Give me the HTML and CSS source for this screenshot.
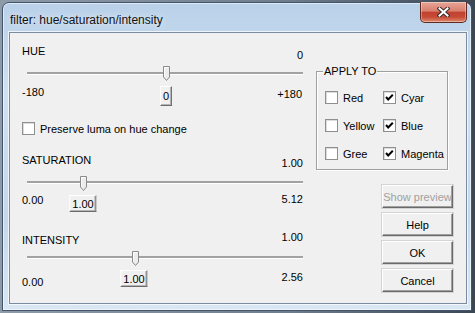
FILE: index.html
```html
<!DOCTYPE html>
<html lang="en">
<head>
    <meta charset="UTF-8">
    <title>filter: hue/saturation/intensity</title>
    <link rel="stylesheet" href="styles.css">
</head>
<body>
    <div class="window">
        <div class="titlebar">
            <span class="title">filter: hue/saturation/intensity</span>
            <div class="close">
                <svg width="13" height="10" viewBox="0 0 13 10">
                    <path d="M2.5 1.5L10.5 8.5M10.5 1.5L2.5 8.5" stroke="#3b2a2a" stroke-width="4" stroke-linecap="square"/>
                    <path d="M2.5 1.5L10.5 8.5M10.5 1.5L2.5 8.5" stroke="#fff" stroke-width="2" stroke-linecap="square"/>
                </svg>
            </div>
        </div>

        <div class="client">
            <div class="sliders">
                <!-- hue -->
                <div class="block hue">
                    <div class="head"><span class="lbl">HUE</span><span class="val">0</span></div>
                    <div class="slider">
                        <div class="track"></div>
                        <svg class="thumb" style="left:141px" width="7" height="15" viewBox="0 0 7 15"><path d="M0.5 0.5H6.5V11L3.5 14.5L0.5 11Z" fill="#ececec" stroke="#8a8a8a"/><path d="M1.5 10.5V1.5H5.5" fill="none" stroke="#fff"/></svg>
                    </div>
                    <div class="foot">
                        <span class="min">-180</span>
                        <span class="box" style="left:144px">0</span>
                        <span class="max">+180</span>
                    </div>
                </div>

                <label class="check-row">
                    <span class="cb"></span>
                    <span>Preserve luma on hue change</span>
                </label>

                <!-- saturation -->
                <div class="block sat">
                    <div class="head"><span class="lbl">SATURATION</span><span class="val">1.00</span></div>
                    <div class="slider">
                        <div class="track"></div>
                        <svg class="thumb" style="left:58px" width="7" height="15" viewBox="0 0 7 15"><path d="M0.5 0.5H6.5V11L3.5 14.5L0.5 11Z" fill="#ececec" stroke="#8a8a8a"/><path d="M1.5 10.5V1.5H5.5" fill="none" stroke="#fff"/></svg>
                    </div>
                    <div class="foot">
                        <span class="min">0.00</span>
                        <span class="box" style="left:61px">1.00</span>
                        <span class="max">5.12</span>
                    </div>
                </div>

                <!-- intensity -->
                <div class="block int">
                    <div class="head"><span class="lbl">INTENSITY</span><span class="val">1.00</span></div>
                    <div class="slider">
                        <div class="track"></div>
                        <svg class="thumb" style="left:110px" width="7" height="15" viewBox="0 0 7 15"><path d="M0.5 0.5H6.5V11L3.5 14.5L0.5 11Z" fill="#ececec" stroke="#8a8a8a"/><path d="M1.5 10.5V1.5H5.5" fill="none" stroke="#fff"/></svg>
                    </div>
                    <div class="foot">
                        <span class="min">0.00</span>
                        <span class="box" style="left:112px">1.00</span>
                        <span class="max">2.56</span>
                    </div>
                </div>
            </div>

            <div class="side">
                <div class="group">
                    <span class="legend">APPLY TO</span>
                    <div class="group-grid">
                        <label class="opt"><span class="cb"></span>Red</label>
                        <label class="opt"><span class="cb on"><svg width="11" height="11" viewBox="0 0 11 11"><polyline points="2,5 4.2,7.5 8.8,2.8" fill="none" stroke="#000" stroke-width="2"/></svg></span>Cyar</label>
                        <label class="opt"><span class="cb"></span>Yellow</label>
                        <label class="opt"><span class="cb on"><svg width="11" height="11" viewBox="0 0 11 11"><polyline points="2,5 4.2,7.5 8.8,2.8" fill="none" stroke="#000" stroke-width="2"/></svg></span>Blue</label>
                        <label class="opt"><span class="cb"></span>Gree</label>
                        <label class="opt"><span class="cb on"><svg width="11" height="11" viewBox="0 0 11 11"><polyline points="2,5 4.2,7.5 8.8,2.8" fill="none" stroke="#000" stroke-width="2"/></svg></span>Magenta</label>
                    </div>
                </div>
                <div class="buttons">
                    <button class="btn disabled">Show preview</button>
                    <button class="btn">Help</button>
                    <button class="btn">OK</button>
                    <button class="btn">Cancel</button>
                </div>
            </div>
        </div>
    </div>
</body>
</html>
```

FILE: styles.css
```css
*{
    margin: 0;
    padding: 0;
    box-sizing: border-box;
}
body{
    width: 475px;
    height: 313px;
    overflow: hidden;
    background: linear-gradient(90deg, #8d9aa8, #6f7e8e 60%, #3c4754);
    font-family: "Liberation Sans", Arial, sans-serif;
    font-size: 11px;
    color: #000;
    padding: 2px 0 0 2px;
}
/* window frame */
.window{
    width: 470px;
    height: 309px;
    border: 1px solid #44546a;
    border-radius: 7px 7px 0 0;
    background: linear-gradient(180deg, #b9d1e9 0%, #cfe0f1 30%, #c3d8ec 70%, #d9e7f4 100%);
    display: flex;
    flex-direction: column;
    box-shadow: inset 0 0 0 1px rgba(255,255,255,.55);
}
.titlebar{
    height: 29px;
    display: flex;
    align-items: flex-start;
    justify-content: space-between;
    padding: 0 4px 0 7px;
}
.title{
    font-size: 12px;
    margin-top: 10px;
    text-shadow: 0 0 6px rgba(255,255,255,.95);
    color: #111;
}
.close{
    width: 47px;
    height: 21px;
    margin-top: -1px;
    border: 1px solid #5e2a22;
    border-top: 0;
    border-radius: 0 0 5px 5px;
    background: linear-gradient(180deg, #e7a596 0%, #d9806e 45%, #c2412f 52%, #c64b37 75%, #e08a6c 100%);
    box-shadow: inset 0 0 0 1px rgba(255,255,255,.35);
    display: flex;
    align-items: center;
    justify-content: center;
}
/* client area */
.client{
    flex: 1;
    margin: 0 4px 6px 6px;
    border: 1px solid #7b8ca0;
    box-shadow: 0 0 0 1px rgba(255,255,255,.7);
    background: #f0f0f0;
    display: flex;
}
.sliders{
    width: 293px;
    padding-left: 12px;
}
.block .head{
    height: 14px;
    display: flex;
    align-items: flex-start;
    justify-content: space-between;
    line-height: 14px;
}
.slider{
    height: 24px;
    position: relative;
}
.track{
    position: absolute;
    left: 5px;
    width: 276px;
    top: 14px;
    height: 3px;
    border-top: 2px solid #a2a2a2;
    border-bottom: 1px solid #fff;
}
.thumb{
    position: absolute;
    top: 9px;
    display: block;
}
.foot{
    position: relative;
    display: flex;
    justify-content: space-between;
    align-items: flex-start;
    line-height: 14px;
}
.box{
    position: absolute;
    transform: translateX(-50%);
    display: flex;
    align-items: center;
    padding: 0 2px;
    background: #f0f0f0;
    border: 1px solid;
    border-color: #fff #6b6b6b #6b6b6b #fff;
    box-shadow: inset -1px -1px #b4b4b4;
}

.hue .head{ margin-top: 11px; }
.hue .val{ padding-top: 4px; }
.hue .thumb{ top: 8px; }
.hue .foot{ height: 24px; }
.hue .min{ padding-top: 3px; }
.hue .max{ padding-top: 5px; padding-right: 1px; }
.hue .box{ top: 4px; height: 20px; }

.sat .head{ margin-top: 18px; }
.sat .val{ padding-top: 3px; }
.sat .foot{ height: 21px; }
.sat .min{ padding-top: 2px; }
.sat .max{ padding-top: 1px; }
.sat .box{ top: 4px; height: 17px; }

.int .head{ margin-top: 18px; }
.int .lbl{ padding-top: 3px; }
.int .track{ top: 12px; }
.int .thumb{ top: 7px; }
.int .foot{ height: 19px; }
.int .min{ padding-top: 7px; }
.int .max{ padding-top: 2px; }
.int .box{ top: 2px; height: 17px; }

.check-row{
    margin-top: 16px;
    height: 13px;
    display: flex;
    align-items: center;
    gap: 5px;
}
.cb{
    width: 13px;
    height: 13px;
    border: 1px solid #8e8f8f;
    background: #fff;
    box-shadow: inset 1px 1px #dcdcdc;
    display: flex;
    align-items: center;
    justify-content: center;
    flex-shrink: 0;
}
.cb svg{ display: block; }

/* right column */
.side{
    width: 137px;
    margin-left: 13px;
    display: flex;
    flex-direction: column;
}
.group{
    position: relative;
    margin-top: 38px;
    width: 132px;
    height: 99px;
    border: 1px solid #a0a0a0;
    box-shadow: inset 1px 1px #fff, 1px 1px #fff;
    padding: 19px 0 0 8px;
}
.legend{
    position: absolute;
    top: -7px;
    left: 6px;
    padding: 0 1px;
    background: #f0f0f0;
    line-height: 13px;
}
.group-grid{
    display: grid;
    grid-template-columns: 58px auto;
    grid-auto-rows: 13px;
    row-gap: 15px;
}
.opt{
    display: flex;
    align-items: center;
    gap: 5px;
}
.buttons{
    margin-top: 15px;
    align-self: flex-end;
    display: flex;
    flex-direction: column;
    gap: 5px;
}
.btn{
    width: 71px;
    height: 23px;
    font-family: "Liberation Sans", Arial, sans-serif;
    font-size: 11px;
    color: #000;
    background: #f0f0f0;
    border: 1px solid;
    border-color: #fff #696969 #696969 #fff;
    box-shadow: inset -1px -1px #a0a0a0, 0 0 0 1px #d4d4d4;
}
.btn.disabled{
    color: #a0a0a0;
}
```
